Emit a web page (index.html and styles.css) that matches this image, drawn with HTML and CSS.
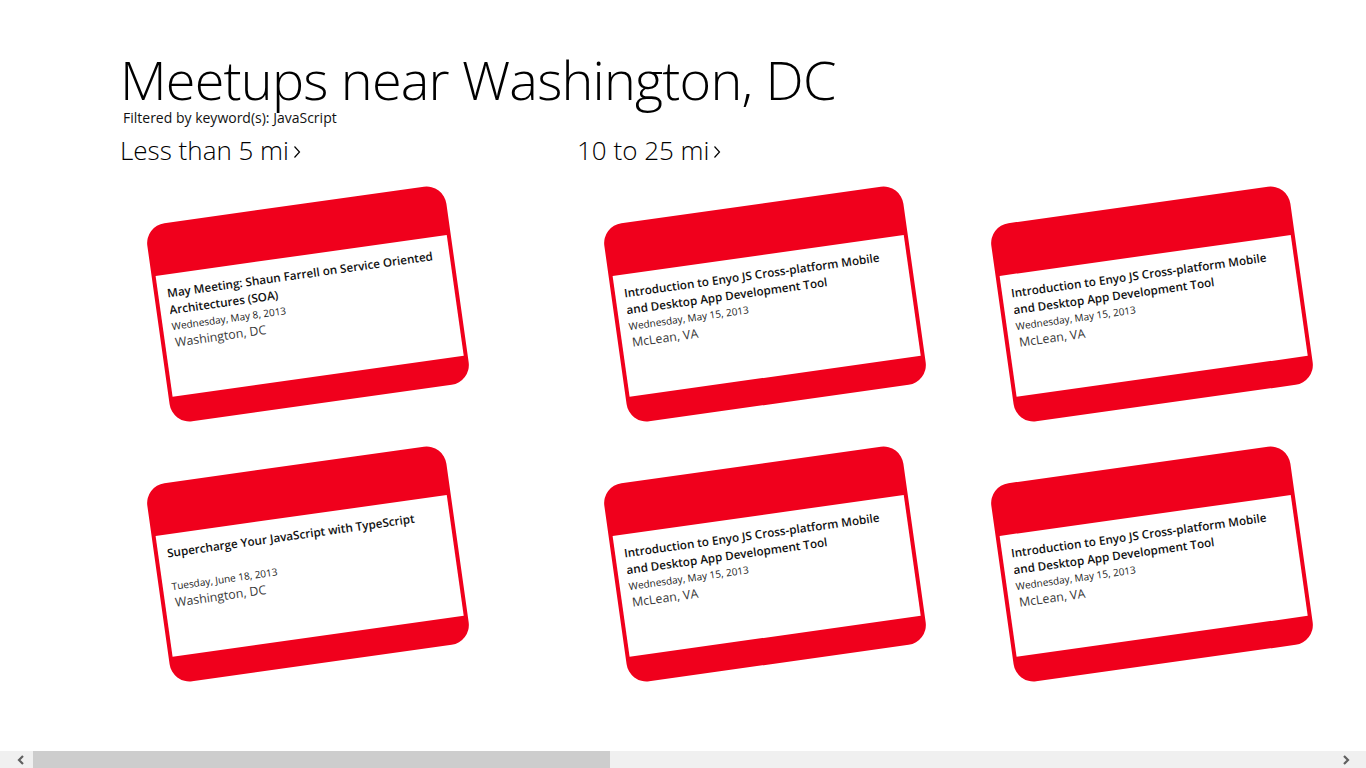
FILE: index.html
```html
<!DOCTYPE html>
<html lang="en">
<head>
<meta charset="utf-8">
<title>Meetups near Washington, DC</title>
<link rel="stylesheet" href="styles.css">
</head>
<body>
<div class="page">
  <main class="content">
    <header class="page-header">
      <h1 class="title">Meetups near Washington, DC</h1>
      <p class="subtitle">Filtered by keyword(s): JavaScript</p>
    </header>
    <div class="groups">
      <section class="group">
        <h2 class="group-header">Less than 5 mi<svg class="chev" width="8" height="14" viewBox="0 0 8 14"><path d="M1.5 1.5 L6.5 7 L1.5 12.5" fill="none" stroke="#000" stroke-width="1.2"/></svg></h2>
        <div class="items">
          <article class="card">
            <div class="card-body">
              <h3 class="card-title">May Meeting: Shaun Farrell on Service Oriented Architectures (SOA)</h3>
              <p class="card-date">Wednesday, May 8, 2013</p>
              <p class="card-place">Washington, DC</p>
            </div>
          </article>
          <article class="card">
            <div class="card-body">
              <h3 class="card-title">Supercharge Your JavaScript with TypeScript</h3>
              <p class="card-date">Tuesday, June 18, 2013</p>
              <p class="card-place">Washington, DC</p>
            </div>
          </article>
        </div>
      </section>
      <section class="group">
        <h2 class="group-header">10 to 25 mi<svg class="chev" width="8" height="14" viewBox="0 0 8 14"><path d="M1.5 1.5 L6.5 7 L1.5 12.5" fill="none" stroke="#000" stroke-width="1.2"/></svg></h2>
        <div class="items">
          <article class="card">
            <div class="card-body">
              <h3 class="card-title">Introduction to Enyo JS Cross-platform Mobile and Desktop App Development Tool</h3>
              <p class="card-date">Wednesday, May 15, 2013</p>
              <p class="card-place">McLean, VA</p>
            </div>
          </article>
          <article class="card">
            <div class="card-body">
              <h3 class="card-title">Introduction to Enyo JS Cross-platform Mobile and Desktop App Development Tool</h3>
              <p class="card-date">Wednesday, May 15, 2013</p>
              <p class="card-place">McLean, VA</p>
            </div>
          </article>
          <article class="card">
            <div class="card-body">
              <h3 class="card-title">Introduction to Enyo JS Cross-platform Mobile and Desktop App Development Tool</h3>
              <p class="card-date">Wednesday, May 15, 2013</p>
              <p class="card-place">McLean, VA</p>
            </div>
          </article>
          <article class="card">
            <div class="card-body">
              <h3 class="card-title">Introduction to Enyo JS Cross-platform Mobile and Desktop App Development Tool</h3>
              <p class="card-date">Wednesday, May 15, 2013</p>
              <p class="card-place">McLean, VA</p>
            </div>
          </article>
        </div>
      </section>
    </div>
  </main>
  <div class="hscroll">
    <div class="hscroll-btn hscroll-left"><svg width="10" height="10" viewBox="0 0 10 10"><path d="M7 1 L3 5 L7 9" fill="none" stroke="#606060" stroke-width="2.2"/></svg></div>
    <div class="hscroll-track"><div class="hscroll-thumb"></div></div>
    <div class="hscroll-btn hscroll-right"><svg width="10" height="10" viewBox="0 0 10 10"><path d="M3 1 L7 5 L3 9" fill="none" stroke="#606060" stroke-width="2.2"/></svg></div>
  </div>
</div>
</body>
</html>
```

FILE: styles.css
```css
html, body {
  margin: 0;
  padding: 0;
  background: #ffffff;
}

body {
  font-family: "Open Sans", "Noto Sans", "Liberation Sans", sans-serif;
  color: #000000;
  overflow: hidden;
}

.page {
  width: 1366px;
  height: 768px;
  display: flex;
  flex-direction: column;
}

.content {
  flex: 1;
  overflow: hidden;
}

.page-header {
  padding: 49px 0 0 120px;
}

.title {
  margin: 0;
  font-size: 54px;
  line-height: 60px;
  font-weight: 300;
  letter-spacing: -0.8px;
}

.subtitle {
  margin: 0;
  padding-left: 3px;
  font-size: 14px;
  line-height: 17px;
  font-weight: 400;
  color: #111111;
}

.groups {
  display: flex;
  padding-left: 120px;
  gap: 118px;
  margin-top: 9px;
}

.group-header {
  margin: 0;
  font-size: 26px;
  line-height: 30px;
  font-weight: 300;
  display: flex;
  align-items: center;
  gap: 4px;
}

.chev {
  margin-top: 3px;
}

.items {
  display: grid;
  grid-template-rows: 200px 200px;
  grid-auto-flow: column;
  grid-auto-columns: 302px;
  column-gap: 85px;
  row-gap: 60px;
  padding-left: 37px;
  margin-top: 39px;
}

.card {
  width: 302px;
  height: 200px;
  box-sizing: border-box;
  background: #f0001c;
  border-radius: 20px;
  padding: 51px 4px 27px 4px;
  transform: rotate(-8deg);
}

.card-body {
  background: #ffffff;
  height: 122px;
  box-sizing: border-box;
  padding: 10px 5px 0 9px;
}

.card-title {
  margin: 0;
  height: 35px;
  font-size: 11.7px;
  line-height: 17px;
  font-weight: 600;
  color: #111111;
  overflow: hidden;
}

.card-date {
  margin: 0;
  font-size: 10px;
  line-height: 14px;
  color: #222222;
}

.card-place {
  margin: 1px 0 0 1px;
  font-size: 12.4px;
  line-height: 17px;
  font-weight: 400;
  color: #3a3a3a;
}

.hscroll {
  height: 17px;
  display: flex;
  background: #f0f0f0;
}

.hscroll-btn {
  width: 33px;
  flex: none;
  display: flex;
  align-items: center;
  justify-content: center;
  box-sizing: border-box;
}

.hscroll-left {
  padding-left: 8px;
}

.hscroll-right {
  padding-right: 8px;
}

.hscroll-track {
  flex: 1;
}

.hscroll-thumb {
  width: 577px;
  height: 17px;
  background: #cdcdcd;
}
```
